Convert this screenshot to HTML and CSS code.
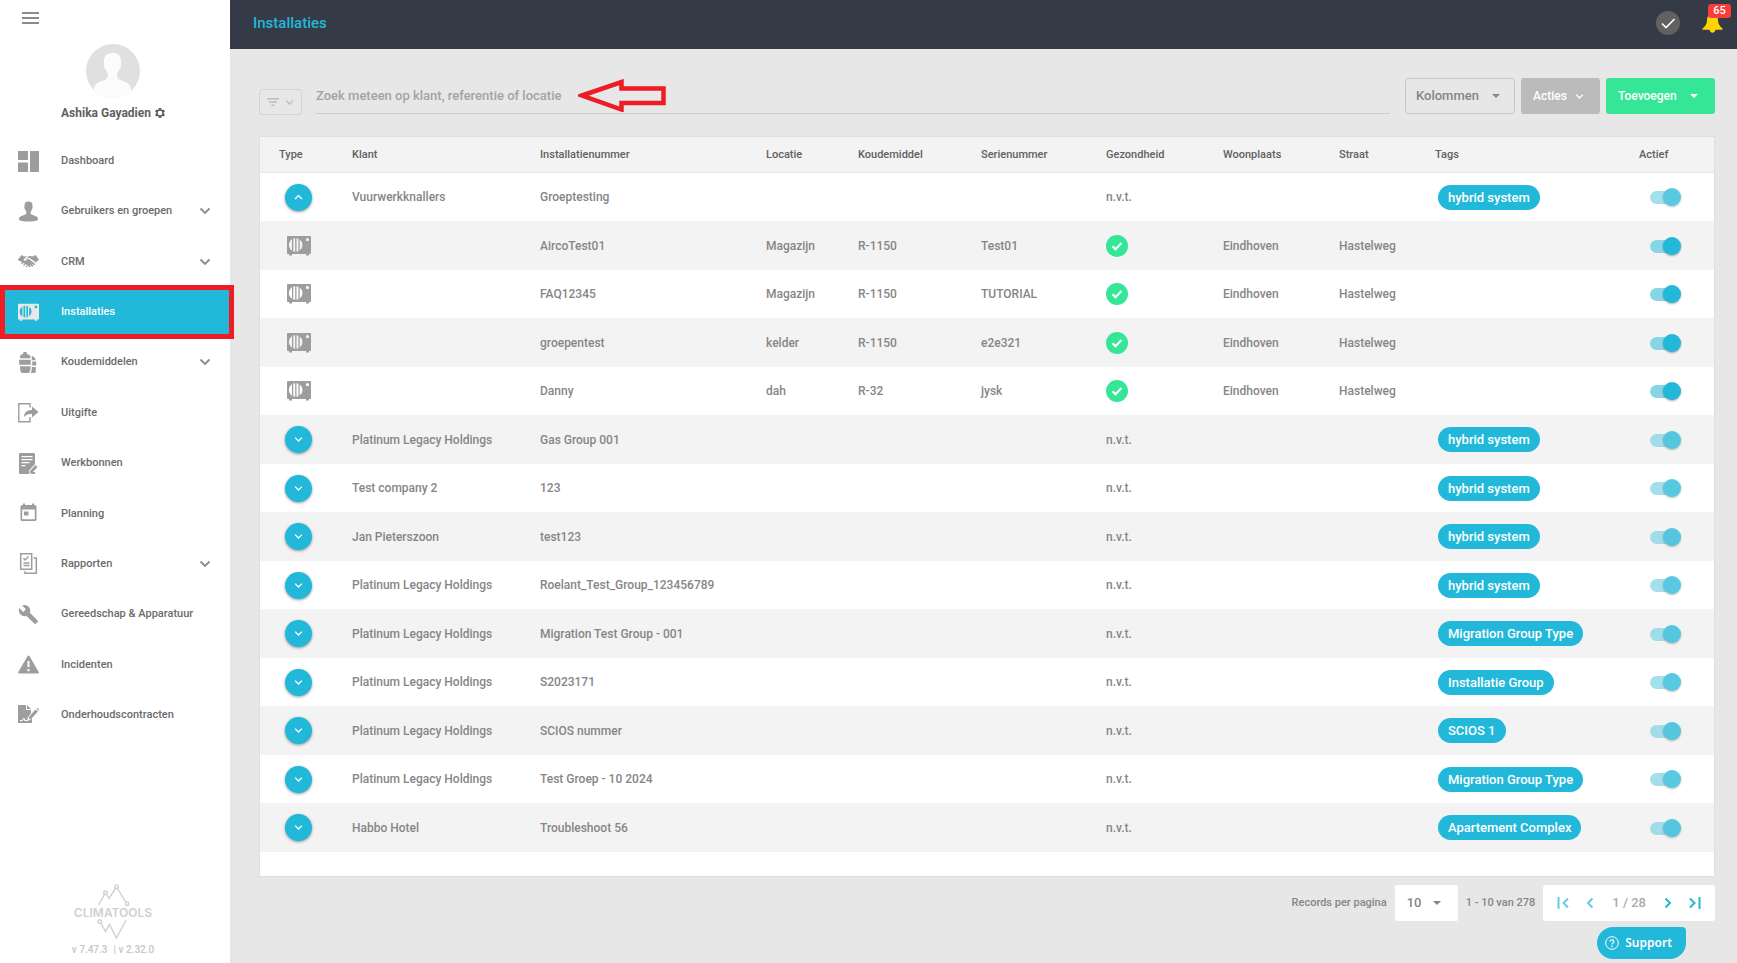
FILE: index.html
```html
<!DOCTYPE html>
<html lang="nl">
<head>
<meta charset="utf-8">
<title>Installaties</title>
<link rel="stylesheet" href="styles.css">
</head>
<body>
<svg class="sprite" aria-hidden="true">
  <symbol id="i-down" viewBox="0 0 12 12"><path d="M1.500 3.500 6 8l4.500-4.500" fill="none" stroke="currentColor" stroke-width="1.800"/></symbol>
  <symbol id="i-up" viewBox="0 0 12 12"><path d="M1.500 8 6 3.500 10.500 8" fill="none" stroke="currentColor" stroke-width="1.800"/></symbol>
  <symbol id="i-caret" viewBox="0 0 8 4"><path d="M0 0h8L4 4z" fill="currentColor"/></symbol>
  <symbol id="i-airco" viewBox="0 0 24 20"><path fill="currentColor" fill-rule="evenodd" d="M1 0h22a1 1 0 0 1 1 1v16a1 1 0 0 1-1 1h-1v1.500h-3V18H5v1.500H2V18H1a1 1 0 0 1-1-1V1a1 1 0 0 1 1-1zM5 3.300A6.800 6.800 0 0 0 5 14.700zM6.300 2.600v12.800l1.900.4V2.200zM9.500 2.200v13.600l1.900-.6V2.800zM12.700 3.500v11A6.800 6.800 0 0 0 12.700 3.500zM20.500 2a1.600 1.600 0 1 0 0 3.200 1.600 1.600 0 0 0 0-3.200z"/></symbol>
  <symbol id="i-ok" viewBox="0 0 22 22"><circle cx="11" cy="11" r="11" fill="#35e696"/><path d="m6.500 11.300 3 3 6-6.300" fill="none" stroke="#fff" stroke-width="2.200"/></symbol>
  <symbol id="i-dash" viewBox="0 0 21 21"><path fill="currentColor" d="M0 0h10v9H0zM0 11.500h10V21H0zM12 0h9v21h-9z"/></symbol>
  <symbol id="i-user" viewBox="0 0 21 21"><path fill="currentColor" d="M10.500.5c3 0 4.300 2 4 4.600-.1 1 .3 1.200 0 2.200-.2.700-.5.900-.8 1.600-.4 1-1 1.700-1.200 2.400 0 1.200.3 1.900 1.500 2.400 2.500 1 6 1.500 6 4.300 0 1.500-1.500 2.500-9.500 2.500S1 19.500 1 18c0-2.800 3.500-3.300 6-4.300 1.200-.5 1.500-1.200 1.500-2.400-.2-.7-.8-1.400-1.200-2.400-.3-.7-.6-.9-.8-1.600-.3-1 .1-1.200 0-2.200C6.200 2.500 7.500.5 10.500.5z"/></symbol>
  <symbol id="i-crm" viewBox="0 0 21 21"><path fill="currentColor" d="M3.500 4 6 5.500 9 5l-3.500 3.500c.5 1.800 2.500 1.500 4-.6l1-.2 6.500 5c.5.600 0 1.500-.8 1.300l-2.600-1.600-.2.400 2 1.700c0 1-1 1.200-1.600.8l-2-1.500-.2.400 1.400 1.300c-.4.800-1.200.7-2 .2L8 13.500C7 12.500 6 13 5.500 12c-1 .2-1.700-.3-1.900-1.200L.5 9.500 0 8.500zM17.500 4l-2.800 1.500-3.500-.7-4 3.600c.8.300 1.300-.2 2.300-1.400l1.800-.2 6.500 4.700 3.200-3zM3.500 12l.9-.6c.6 0 .8.600.5 1l-1 .7c-.8 0-1-.7-.4-1.100zm2 1.700 1-.7c.7 0 .9.700.5 1.100l-1 .8c-.8 0-1-.8-.5-1.200zm2.300 1.600.8-.6c.7 0 .9.600.5 1l-.8.700c-.7 0-.9-.7-.5-1.100z"/></symbol>
  <symbol id="i-gas" viewBox="0 0 21 21"><path fill="currentColor" d="M5.500 0h3l.5 2c2 .3 3.500 1.500 3.500 3v1.300h-10.500V5C2 3.500 3 2.300 5 2zM1.200 7.800h11.500v5H1.200zM2 14.300h10.500v1.500c0 3-1 5.200-2 5.200H4c-1 0-2-2.200-2-5.200zM13.800 4c2 .5 3.800 2 3.800 4.300h-3.800zM14.200 9.600h4V13.500h-4zM13.800 15h4v3.500c0 1.500-.5 2.500-1 2.500h-4c.7-1.500 1-3.500 1-6z"/></symbol>
  <symbol id="i-out" viewBox="0 0 21 21"><path fill="none" stroke="currentColor" stroke-width="1.400" d="M12 5.500V1.700H.8v18.100H12V15"/><path fill="currentColor" d="M14 4.500 20.500 10 14 15.500V12c-3.500 0-6 .5-8 3 0-4.500 3-7 8-7z"/></symbol>
  <symbol id="i-work" viewBox="0 0 21 21"><path fill="currentColor" fill-rule="evenodd" d="M2 0h14a1 1 0 0 1 1 1v10l-6 6.500V21H2a1 1 0 0 1-1-1V1a1 1 0 0 1 1-1zM3.500 3v1.200h11V3zm0 3v1.200h11V6zm0 3v1.200h8V9zm0 3v1.200h4V12z"/><path fill="currentColor" d="m17.500 12 2 2-5.500 6-2.500.5.500-2.500zM15 19h2v2h-4z"/></symbol>
  <symbol id="i-plan" viewBox="0 0 21 21"><path fill="currentColor" fill-rule="evenodd" d="M5 2V.5h2V2h7V.500h2V2h1a1.500 1.500 0 0 1 1.500 1.500v13A1.500 1.500 0 0 1 17 18H4a1.500 1.500 0 0 1-1.500-1.500v-13A1.500 1.500 0 0 1 4 2zM4.200 6.500v9.700h12.600V6.500zM6 8.500h4.500v4H6z"/></symbol>
  <symbol id="i-rep" viewBox="0 0 21 21"><path fill="none" stroke="currentColor" stroke-width="1.500" d="M2.700.8h11v15.400h-11zM15.500 5h2.800v15.200H7v-2M5.500 5.300 7 7l3.500-3.500M5.500 10h6M5.500 12.500h6"/></symbol>
  <symbol id="i-tool" viewBox="0 0 24 24"><path fill="currentColor" d="m22.700 19-9.100-9.100c.9-2.300.4-5-1.500-6.900-2-2-5-2.400-7.400-1.300L9 6 6 9 1.600 4.700C.4 7.100.9 10.100 2.900 12.100c1.900 1.900 4.600 2.400 6.900 1.500l9.100 9.100c.4.400 1 .4 1.400 0l2.300-2.300c.5-.4.500-1.100.1-1.400z"/></symbol>
  <symbol id="i-warn" viewBox="0 0 21 21"><path fill="currentColor" fill-rule="evenodd" d="M9.600 2c.4-.7 1.400-.7 1.800 0l9.300 16c.4.700-.1 1.400-.8 1.400H1.100c-.7 0-1.200-.7-.8-1.400zM9.500 7v6h2V7zm0 8v2.200h2V15z"/></symbol>
  <symbol id="i-contract" viewBox="0 0 21 21"><path fill="currentColor" fill-rule="evenodd" d="M0 1h8v5h5v3l-3.500 5v2.500l2.500-.5 2-2V19H0zM2 17h2.500l1-2 1 2H11v-1H7.500L6 13.500 4 16H2z"/><path fill="currentColor" d="m9 1 4 4H9zM17.500 5.500l2.500 2-6.500 7-2.800.8.500-2.800zM18.500 4.500l1-.5 1.500 1.500-.5 1.300z"/></symbol>
</svg>

<aside class="sidebar">
  <button class="burger" aria-label="Menu"><span></span><span></span><span></span></button>
  <svg class="avatar" viewBox="0 0 54 54" aria-hidden="true">
    <defs><clipPath id="round"><circle cx="27" cy="27" r="27"/></clipPath></defs>
    <g clip-path="url(#round)"><path fill="#e2dfe1" d="M0 0h54v54H0z"/><path fill="#fcfcfc" d="M27 9c6 0 8.500 4 8 9-.2 2 .6 2.500 0 4.500-.3 1.200-1 1.500-1.500 3-.8 2-2 3-2.500 5 0 4 2 5 6 6.500 5 1.500 8 4 8 9V54H8v-8c0-5 3-7.500 8-9 4-1.500 6-2.500 6-6.500-.5-2-1.700-3-2.500-5-.5-1.500-1.200-1.800-1.500-3-.6-2 .2-2.500 0-4.500-.5-5 2-9 9-9z"/></g>
  </svg>
  <div class="profile"><span>Ashika Gayadien</span>
    <svg class="gear" viewBox="2 2 20 20" aria-hidden="true"><path fill="currentColor" fill-rule="evenodd" d="M19.430 12.980a7.800 7.800 0 0 0 0-1.960l2.110-1.650c.190-.150.240-.420.120-.640l-2-3.460c-.120-.220-.390-.300-.610-.220l-2.490 1a7.300 7.300 0 0 0-1.690-.980l-.380-2.650A.490.490 0 0 0 14 2h-4c-.250 0-.460.180-.490.420l-.380 2.650c-.610.250-1.170.590-1.690.980l-2.490-1c-.230-.090-.490 0-.610.220l-2 3.460c-.130.220-.070.490.120.640l2.110 1.650a7.900 7.900 0 0 0 0 1.960l-2.110 1.650c-.190.150-.240.420-.120.640l2 3.460c.120.220.390.300.610.220l2.490-1c.520.400 1.080.730 1.690.980l.380 2.650c.030.240.240.420.490.420h4c.250 0 .460-.180.490-.420l.380-2.650c.610-.250 1.170-.590 1.690-.980l2.490 1c.230.090.490 0 .610-.220l2-3.460c.120-.220.070-.490-.120-.640zM12 16.500a4.500 4.500 0 1 1 0-9 4.500 4.500 0 0 1 0 9z"/></svg>
  </div>
  <nav class="menu">
    <a href="#"><svg class="mi"><use href="#i-dash"/></svg><span>Dashboard</span></a>
    <a href="#"><svg class="mi"><use href="#i-user"/></svg><span>Gebruikers en groepen</span><svg class="chev"><use href="#i-down"/></svg></a>
    <a href="#"><svg class="mi"><use href="#i-crm"/></svg><span>CRM</span><svg class="chev"><use href="#i-down"/></svg></a>
    <a href="#" class="active"><svg class="mi"><use href="#i-airco"/></svg><span>Installaties</span></a>
    <a href="#"><svg class="mi"><use href="#i-gas"/></svg><span>Koudemiddelen</span><svg class="chev"><use href="#i-down"/></svg></a>
    <a href="#"><svg class="mi"><use href="#i-out"/></svg><span>Uitgifte</span></a>
    <a href="#"><svg class="mi"><use href="#i-work"/></svg><span>Werkbonnen</span></a>
    <a href="#"><svg class="mi"><use href="#i-plan"/></svg><span>Planning</span></a>
    <a href="#"><svg class="mi"><use href="#i-rep"/></svg><span>Rapporten</span><svg class="chev"><use href="#i-down"/></svg></a>
    <a href="#"><svg class="mi"><use href="#i-tool"/></svg><span>Gereedschap &amp; Apparatuur</span></a>
    <a href="#"><svg class="mi"><use href="#i-warn"/></svg><span>Incidenten</span></a>
    <a href="#"><svg class="mi"><use href="#i-contract"/></svg><span>Onderhoudscontracten</span></a>
  </nav>
  <div class="brand">
    <svg class="peak" viewBox="0 0 34 22" aria-hidden="true"><g fill="none" stroke="currentColor" stroke-width="1.400"><path d="m1.500 21 6-10.500M9.500 10.500l2.500 4 6.500-10M20.500 4.500l8.500 14"/><circle cx="8.500" cy="8.700" r="1.800"/><circle cx="19.500" cy="2.700" r="1.800"/><circle cx="30" cy="19.700" r="1.700"/></g></svg>
    <span class="wordmark">CLIMATOOLS</span>
    <svg class="valley" viewBox="0 0 34 22" aria-hidden="true"><g fill="none" stroke="currentColor" stroke-width="1.400"><path d="m3.800 4 4.700 8.500 4-7 7 13.500 9.500-18"/><circle cx="2.800" cy="2.500" r="1.800"/></g></svg>
    <div class="version"><span>v 7.47.3</span><span>| v 2.32.0</span></div>
  </div>
</aside>

<div class="page">
  <header class="topbar">
    <h1>Installaties</h1>
    <button class="done" aria-label="Taken"><svg viewBox="0 0 24 24"><path d="m6 12.500 4 4 8.500-8.500" fill="none" stroke="#fff" stroke-width="1.600"/></svg></button>
    <button class="bell" aria-label="Meldingen"><svg viewBox="0 0 21 21"><path fill="#ffd400" d="M10.500 0c1 0 1.600.6 1.600 1.400 2.600.7 3.900 2.600 3.900 5.600 0 4 1.500 6 4.500 8.500v1.200h-7c-.4 1.800-1.500 3-3 3s-2.600-1.200-3-3h-7v-1.200C3.500 13 5 11 5 7c0-3 1.300-4.900 3.900-5.600C8.900.6 9.500 0 10.500 0z"/></svg><span class="count">65</span></button>
  </header>

  <main class="content">
    <div class="toolbar">
      <button class="filter" aria-label="Filter"><svg class="lines" viewBox="0 0 12 8"><path fill="currentColor" d="M0 0h12v1.500H0zM2 3.200h8v1.500H2zM4.500 6.500h3V8h-3z"/></svg><svg class="tiny"><use href="#i-down"/></svg></button>
      <div class="search">
        <input type="text" aria-label="Zoeken" placeholder="Zoek meteen op klant, referentie of locatie">
        <svg class="arrow" viewBox="0 0 88 33" aria-hidden="true"><path d="M4 16.500 43.500 3v6.500H85.500v14.500H43.500v6.500z" fill="none" stroke="#ee1c25" stroke-width="4.500"/></svg>
      </div>
      <div class="actions">
        <button class="btn outline">Kolommen<svg class="caret"><use href="#i-caret"/></svg></button>
        <button class="btn grey">Acties<svg class="tiny"><use href="#i-down"/></svg></button>
        <button class="btn green">Toevoegen<svg class="caret"><use href="#i-caret"/></svg></button>
      </div>
    </div>

    <div class="card">
      <table>
        <colgroup><col class="c-type"><col class="c-klant"><col class="c-num"><col class="c-loc"><col class="c-gas"><col class="c-serie"><col class="c-gez"><col class="c-woon"><col class="c-straat"><col class="c-tags"><col class="c-act"></colgroup>
        <thead><tr><th>Type</th><th>Klant</th><th>Installatienummer</th><th>Locatie</th><th>Koudemiddel</th><th>Serienummer</th><th>Gezondheid</th><th>Woonplaats</th><th>Straat</th><th>Tags</th><th>Actief</th></tr></thead>
        <tbody>
          <tr><td class="type"><button class="round" aria-label="Inklappen"><svg><use href="#i-up"/></svg></button></td><td>Vuurwerkknallers</td><td>Groeptesting</td><td></td><td></td><td></td><td>n.v.t.</td><td></td><td></td><td><span class="tag">hybrid system</span></td><td><input type="checkbox" class="switch" aria-label="Actief" checked disabled></td></tr>
          <tr><td class="type"><svg class="unit"><use href="#i-airco"/></svg></td><td></td><td>AircoTest01</td><td>Magazijn</td><td>R-1150</td><td>Test01</td><td><svg class="ok"><use href="#i-ok"/></svg></td><td>Eindhoven</td><td>Hastelweg</td><td></td><td><input type="checkbox" class="switch" aria-label="Actief" checked></td></tr>
          <tr><td class="type"><svg class="unit"><use href="#i-airco"/></svg></td><td></td><td>FAQ12345</td><td>Magazijn</td><td>R-1150</td><td>TUTORIAL</td><td><svg class="ok"><use href="#i-ok"/></svg></td><td>Eindhoven</td><td>Hastelweg</td><td></td><td><input type="checkbox" class="switch" aria-label="Actief" checked></td></tr>
          <tr><td class="type"><svg class="unit"><use href="#i-airco"/></svg></td><td></td><td>groepentest</td><td>kelder</td><td>R-1150</td><td>e2e321</td><td><svg class="ok"><use href="#i-ok"/></svg></td><td>Eindhoven</td><td>Hastelweg</td><td></td><td><input type="checkbox" class="switch" aria-label="Actief" checked></td></tr>
          <tr><td class="type"><svg class="unit"><use href="#i-airco"/></svg></td><td></td><td>Danny</td><td>dah</td><td>R-32</td><td>jysk</td><td><svg class="ok"><use href="#i-ok"/></svg></td><td>Eindhoven</td><td>Hastelweg</td><td></td><td><input type="checkbox" class="switch" aria-label="Actief" checked></td></tr>
          <tr><td class="type"><button class="round" aria-label="Uitklappen"><svg><use href="#i-down"/></svg></button></td><td>Platinum Legacy Holdings</td><td>Gas Group 001</td><td></td><td></td><td></td><td>n.v.t.</td><td></td><td></td><td><span class="tag">hybrid system</span></td><td><input type="checkbox" class="switch" aria-label="Actief" checked disabled></td></tr>
          <tr><td class="type"><button class="round" aria-label="Uitklappen"><svg><use href="#i-down"/></svg></button></td><td>Test company 2</td><td>123</td><td></td><td></td><td></td><td>n.v.t.</td><td></td><td></td><td><span class="tag">hybrid system</span></td><td><input type="checkbox" class="switch" aria-label="Actief" checked disabled></td></tr>
          <tr><td class="type"><button class="round" aria-label="Uitklappen"><svg><use href="#i-down"/></svg></button></td><td>Jan Pieterszoon</td><td>test123</td><td></td><td></td><td></td><td>n.v.t.</td><td></td><td></td><td><span class="tag">hybrid system</span></td><td><input type="checkbox" class="switch" aria-label="Actief" checked disabled></td></tr>
          <tr><td class="type"><button class="round" aria-label="Uitklappen"><svg><use href="#i-down"/></svg></button></td><td>Platinum Legacy Holdings</td><td>Roelant_Test_Group_123456789</td><td></td><td></td><td></td><td>n.v.t.</td><td></td><td></td><td><span class="tag">hybrid system</span></td><td><input type="checkbox" class="switch" aria-label="Actief" checked disabled></td></tr>
          <tr><td class="type"><button class="round" aria-label="Uitklappen"><svg><use href="#i-down"/></svg></button></td><td>Platinum Legacy Holdings</td><td>Migration Test Group - 001</td><td></td><td></td><td></td><td>n.v.t.</td><td></td><td></td><td><span class="tag">Migration Group Type</span></td><td><input type="checkbox" class="switch" aria-label="Actief" checked disabled></td></tr>
          <tr><td class="type"><button class="round" aria-label="Uitklappen"><svg><use href="#i-down"/></svg></button></td><td>Platinum Legacy Holdings</td><td>S2023171</td><td></td><td></td><td></td><td>n.v.t.</td><td></td><td></td><td><span class="tag">Installatie Group</span></td><td><input type="checkbox" class="switch" aria-label="Actief" checked disabled></td></tr>
          <tr><td class="type"><button class="round" aria-label="Uitklappen"><svg><use href="#i-down"/></svg></button></td><td>Platinum Legacy Holdings</td><td>SCIOS nummer</td><td></td><td></td><td></td><td>n.v.t.</td><td></td><td></td><td><span class="tag">SCIOS 1</span></td><td><input type="checkbox" class="switch" aria-label="Actief" checked disabled></td></tr>
          <tr><td class="type"><button class="round" aria-label="Uitklappen"><svg><use href="#i-down"/></svg></button></td><td>Platinum Legacy Holdings</td><td>Test Groep - 10 2024</td><td></td><td></td><td></td><td>n.v.t.</td><td></td><td></td><td><span class="tag">Migration Group Type</span></td><td><input type="checkbox" class="switch" aria-label="Actief" checked disabled></td></tr>
          <tr><td class="type"><button class="round" aria-label="Uitklappen"><svg><use href="#i-down"/></svg></button></td><td>Habbo Hotel</td><td>Troubleshoot 56</td><td></td><td></td><td></td><td>n.v.t.</td><td></td><td></td><td><span class="tag">Apartement Complex</span></td><td><input type="checkbox" class="switch" aria-label="Actief" checked disabled></td></tr>
        </tbody>
      </table>
    </div>

    <footer class="pagination">
      <label for="size">Records per pagina</label>
      <div class="size"><select id="size"><option>10</option></select><svg class="caret"><use href="#i-caret"/></svg></div>
      <span>1 - 10 van 278</span>
      <div class="pager">
        <button class="off" aria-label="Eerste"><svg viewBox="0 0 12 12"><path d="M1.500 0v12M11 1.500 6.500 6l4.500 4.500"/></svg></button>
        <button class="off" aria-label="Vorige"><svg viewBox="0 0 12 12"><path d="M8.500 1.500 4 6l4.500 4.500"/></svg></button>
        <span class="where">1 / 28</span>
        <button aria-label="Volgende"><svg viewBox="0 0 12 12"><path d="M3.500 1.500 8 6l-4.500 4.500"/></svg></button>
        <button aria-label="Laatste"><svg viewBox="0 0 12 12"><path d="M1 1.500 5.500 6 1 10.500M10.500 0v12"/></svg></button>
      </div>
    </footer>
  </main>
</div>
<button class="support"><svg viewBox="0 0 14 14" aria-hidden="true"><circle cx="7" cy="7" r="6.300" fill="none" stroke="currentColor"/><path d="M5.200 5.600c0-2.300 3.700-2.300 3.700 0C8.900 7 7 6.900 7 8.500M7 9.600v1.300" fill="none" stroke="currentColor" stroke-width="1.200"/></svg>Support</button>
</body>
</html>
```

FILE: styles.css
```css
* { box-sizing: border-box; }

body {
  margin: 0;
  display: flex;
  min-height: 100vh;
  background: #e7e7e7;
  color: #868686;
  font: 500 12px/16px Roboto, "Liberation Sans", sans-serif;
}

button, input, select { font: inherit; color: inherit; margin: 0; }
button { border: 0; padding: 0; background: none; cursor: pointer; }
svg { display: block; }
.sprite { position: absolute; width: 0; height: 0; }

/* Sidebar */
.sidebar {
  flex: 0 0 230px;
  display: flex;
  flex-direction: column;
  align-items: center;
  min-height: 100vh;
  background: #fff;
}
.burger {
  align-self: flex-start;
  display: grid;
  gap: 3px;
  width: 17px;
  margin: 12px 0 20px 22px;
}
.burger span { height: 2px; background: #8b8b8b; }
.avatar { width: 54px; height: 54px; margin-right: 4px; }
.profile {
  display: flex;
  align-items: center;
  gap: 4px;
  margin: 7px 4px 15px 0;
  color: #5f5f5f;
  font-weight: 700;
}
.gear { width: 10px; height: 10px; }

.menu {
  flex: 1;
  align-self: stretch;
  display: flex;
  flex-direction: column;
  justify-content: space-between;
}
.menu a {
  position: relative;
  display: flex;
  align-items: center;
  height: 50px;
  padding: 0 19px 0 18px;
  color: #6b6b6b;
  font-size: 11px;
  text-decoration: none;
}
.menu span { flex: 1; padding-left: 22px; }
.mi { width: 21px; height: 21px; color: #9d9d9d; }
.chev { width: 12px; height: 12px; color: #8b8b8b; }
.menu .active { background: #22b8d9; color: #fff; }
.active .mi { color: #e8e8e8; }
.active::after {
  content: "";
  position: absolute;
  inset: -2px -4px -2px 0;
  z-index: 2;
  border: 5px solid #ee1c25;
}

.brand {
  display: flex;
  flex-direction: column;
  align-items: center;
  padding: 144px 4px 5px 0;
  color: #d0d0d0;
  font-size: 10px;
}
.peak, .valley { width: 34px; height: 22px; margin-left: 2px; }
.wordmark { font: 600 12px/13px Inter, sans-serif; }
.valley { margin-bottom: 1px; }
.version { display: flex; gap: 6px; color: #c6c6c6; }

/* Main column */
.page { flex: 1; min-width: 0; }
.topbar {
  display: flex;
  align-items: center;
  gap: 22px;
  height: 49px;
  padding: 0 14px 4px 23px;
  background: #343b46;
}
.topbar h1 { flex: 1; margin: 0; color: #22b8d9; font-size: 15px; font-weight: 500; }
.done { width: 24px; height: 24px; border-radius: 50%; background: #616161; }
.bell { position: relative; padding-top: 1px; }
.bell svg { width: 21px; height: 21px; }
.count {
  position: absolute;
  top: -8px;
  right: -8px;
  width: 23px;
  border-radius: 3px;
  background: #f73e3a;
  color: #fff;
  font-size: 11px;
  line-height: 14px;
}

.content { padding: 29px 22px 0 29px; }
.toolbar { display: flex; align-items: flex-start; height: 58px; }
.filter {
  display: flex;
  align-items: center;
  justify-content: center;
  gap: 6px;
  width: 43px;
  height: 26px;
  margin: 11px 14px 0 0;
  border: 1px solid #d4d4d4;
  border-radius: 3px;
  color: #bdbdbd;
}
.lines { width: 12px; height: 8px; }
.tiny { width: 9px; height: 9px; }
.search { position: relative; flex: 1; height: 36px; border-bottom: 1px solid #cbcbcb; }
.search input {
  width: 100%;
  height: 35px;
  padding: 0;
  border: 0;
  outline: 0;
  background: none;
  font-size: 13px;
}
.search input::placeholder { color: #a3a3a3; opacity: 1; }
.arrow { position: absolute; left: 262px; top: 1px; width: 88px; height: 33px; }
.actions { display: flex; gap: 6px; margin-left: 15px; }
.btn {
  display: flex;
  align-items: center;
  height: 36px;
  padding: 0 12px;
  border-radius: 3px;
  color: #fff;
}
.btn .tiny { margin-left: 8px; }
.btn .caret { margin-left: 13px; }
.caret { width: 8px; height: 4px; }
.outline { width: 110px; padding: 0 10px; border: 1px solid #c6c6c6; color: #858585; font-size: 13px; }
.grey { width: 79px; background: #bbb; }
.green { width: 109px; background: #35e696; }

/* Table */
.card {
  padding-bottom: 24px;
  border: 1px solid #dedede;
  background: #fff;
}
table { width: 100%; table-layout: fixed; border-collapse: separate; border-spacing: 0; }
.c-type { width: 73px; }
.c-klant { width: 188px; }
.c-num { width: 226px; }
.c-loc { width: 92px; }
.c-gas { width: 123px; }
.c-serie { width: 125px; }
.c-gez { width: 117px; }
.c-woon { width: 116px; }
.c-straat { width: 96px; }
.c-tags { width: 204px; }
.c-act { width: 94px; }
th {
  height: 36px;
  padding: 0 0 0 19px;
  border-bottom: 1px solid #e6e6e6;
  background: #f3f3f3;
  color: #616161;
  font-size: 11px;
  font-weight: 500;
  text-align: left;
}
td { height: 48px; padding: 0 0 0 19px; white-space: nowrap; }
tr:nth-child(even) td { height: 49px; background: #f3f3f3; }
.type { padding: 0 0 0 4px; }
.type > * { margin: 0 auto; }
.round {
  display: flex;
  align-items: center;
  justify-content: center;
  width: 27px;
  height: 27px;
  border-radius: 50%;
  background: #22b8d9;
  box-shadow: 0 1px 3px rgba(0, 0, 0, .4);
  color: #fff;
}
.round svg { width: 9px; height: 9px; }
.unit { width: 24px; height: 20px; color: #9d9d9d; }
.ok { width: 22px; height: 22px; }
.tag {
  display: inline-block;
  margin-left: 3px;
  padding: 0 10px;
  border-radius: 13px;
  background: #22b8d9;
  color: #fff;
  font-size: 13px;
  line-height: 25px;
}
.switch {
  appearance: none;
  position: relative;
  display: flex;
  align-items: center;
  justify-content: flex-end;
  width: 31px;
  height: 18px;
  margin-left: 11px;
}
.switch::before {
  content: "";
  position: absolute;
  inset: 3px 4px 2px 0;
  border-radius: 7px;
  background: #85d6e6;
}
.switch::after {
  content: "";
  position: relative;
  width: 18px;
  height: 18px;
  border-radius: 50%;
  background: #22b8d9;
  box-shadow: 0 1px 2px rgba(0, 0, 0, .35);
}
.switch:disabled { opacity: .75; }

/* Pagination */
.pagination {
  display: flex;
  align-items: center;
  justify-content: flex-end;
  gap: 8px;
  padding-top: 8px;
  font-size: 11px;
}
.size { display: flex; align-items: center; width: 63px; height: 36px; border-radius: 2px; background: #fff; }
.size select {
  appearance: none;
  width: 38px;
  padding: 0 0 0 12px;
  border: 0;
  background: none;
  font-size: 13px;
}
.pager {
  display: flex;
  align-items: center;
  height: 36px;
  padding: 0 14px;
  border-radius: 3px;
  background: #fff;
}
.pager button { color: #22b8d9; }
.pager svg { width: 12px; height: 12px; fill: none; stroke: currentColor; stroke-width: 2; }
.pager button + button { margin-left: 15px; }
.pager .off { opacity: .7; }
.where { margin: 0 16px; color: #ababab; font-size: 13px; }

.support {
  position: fixed;
  right: 51px;
  bottom: 4px;
  display: flex;
  align-items: center;
  gap: 6px;
  height: 32px;
  padding: 0 14px 0 8px;
  border-radius: 16px 4px 16px 16px;
  background: #22b8d9;
  color: #fff;
  font: 600 12px/16px "Noto Sans", sans-serif;
}
.support svg { width: 14px; height: 14px; }
```
